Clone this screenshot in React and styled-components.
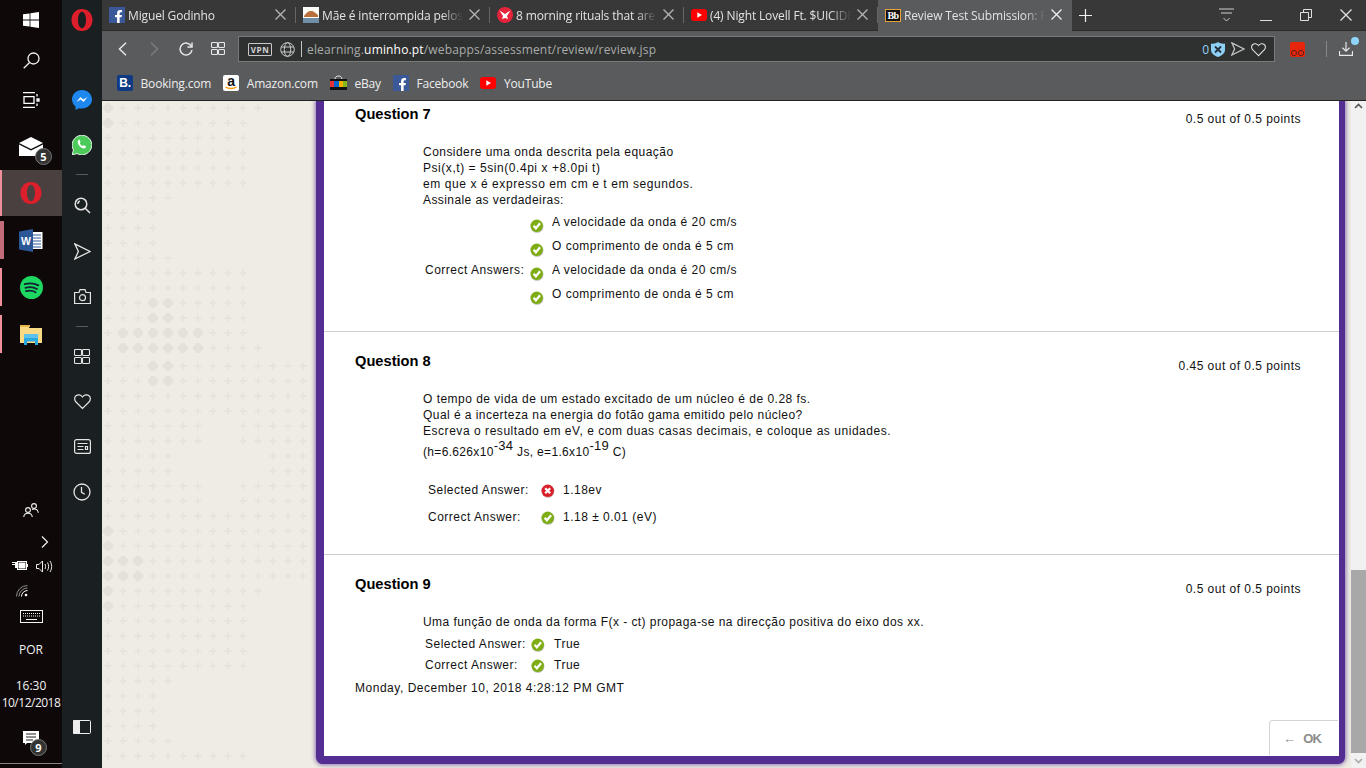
import React from "react";
import styled, { createGlobalStyle } from "styled-components";
import { FaFacebookF } from "react-icons/fa";

const GlobalStyle = createGlobalStyle`
  html, body {
    margin: 0;
    width: 1366px;
    height: 768px;
    overflow: hidden;
    background: #0f0809;
  }
  * { box-sizing: border-box; }
`;

// Shell =========================

const Screen = styled.div`
  display: flex;
  width: 1366px;
  height: 768px;
  overflow: hidden;
  font-family: "Liberation Sans", Arial, sans-serif;
`;

const Taskbar = styled.aside`
  display: flex;
  flex-direction: column;
  width: 62px;
  flex: none;
  background: #0f0809;
  color: #f2f2f2;
  font-family: "Open Sans", sans-serif;
`;

const TaskSlot = styled.div`
  position: relative;
  display: flex;
  align-items: center;
  justify-content: center;
  height: ${({ $h }) => $h || 40}px;
  margin-top: ${({ $mt }) => $mt || 0}px;
  padding-top: ${({ $pt }) => $pt || 0}px;
  background: ${({ $active }) => ($active ? "#4a4040" : "transparent")};
  ${({ $bar }) =>
    $bar &&
    `
    &::before {
      content: "";
      position: absolute;
      left: 0;
      top: ${$bar.top}px;
      bottom: ${$bar.bottom}px;
      width: ${$bar.w}px;
      background: ${$bar.c};
    }
  `}
`;

const CountBadge = styled.span`
  position: absolute;
  left: ${({ $x }) => $x}px;
  top: ${({ $y }) => $y}px;
  display: flex;
  align-items: center;
  justify-content: center;
  width: 17px;
  height: 17px;
  border-radius: 50%;
  background: #333;
  border: 1px solid #777;
  color: #fff;
  font-size: 11px;
  font-weight: 700;
`;

const TaskSpacer = styled.div`
  flex: 1;
`;

const TrayRow = styled.div`
  display: flex;
  align-items: center;
  justify-content: ${({ $justify }) => $justify || "center"};
  gap: ${({ $gap }) => $gap || 0}px;
  height: ${({ $h }) => $h}px;
  padding: ${({ $pad }) => $pad || "0"};
  margin-bottom: ${({ $mb }) => $mb || 0}px;
`;

const TrayText = styled.div`
  font-size: ${({ $size }) => $size || 12}px;
  line-height: ${({ $lh }) => $lh || 17}px;
  text-align: center;
  letter-spacing: ${({ $ls }) => $ls || 0}px;
  white-space: nowrap;
`;

const TaskFoot = styled.div`
  height: 1px;
  margin: 3px 0 4px;
  background: #8a8080;
`;

const OperaRail = styled.nav`
  display: flex;
  flex-direction: column;
  align-items: center;
  width: 40px;
  flex: none;
  background: #1a1f21;
`;

const RailSlot = styled.div`
  display: flex;
  align-items: center;
  justify-content: center;
  width: 100%;
  height: ${({ $h }) => $h || 45}px;
  margin-top: ${({ $mt }) => $mt || 0}px;
  margin-bottom: ${({ $mb }) => $mb || 0}px;
`;

const RailRule = styled.div`
  width: 12px;
  height: 1px;
  margin: ${({ $m }) => $m};
  background: #555a5c;
`;

const RailSpacer = styled.div`
  flex: 1;
`;

const BrowserPane = styled.main`
  display: flex;
  flex-direction: column;
  flex: 1;
  min-width: 0;
`;

// Browser chrome =========================

const TabStrip = styled.div`
  display: flex;
  align-items: stretch;
  height: 31px;
  flex: none;
  background: #383838;
  border-bottom: 1px solid #2a2a2a;
  font-family: "Open Sans", sans-serif;
`;

const Tab = styled.div`
  position: relative;
  display: flex;
  align-items: center;
  width: 194px;
  flex: none;
  padding-left: 7px;
  height: ${({ $active }) => ($active ? 31 : 30)}px;
  background: ${({ $active }) => ($active ? "#5a5b5d" : "transparent")};
  ${({ $active }) =>
    !$active &&
    `
    &::after {
      content: "";
      position: absolute;
      right: 0;
      top: 7px;
      height: 16px;
      width: 1px;
      background: #666;
    }
  `}
`;

const Favicon = styled.span`
  display: flex;
  align-items: center;
  justify-content: center;
  width: 16px;
  height: 16px;
  flex: none;
  overflow: hidden;
  background: ${({ $bg }) => $bg || "transparent"};
  color: ${({ $color }) => $color || "#fff"};
  border-radius: ${({ $r }) => $r || 0}px;
  font-family: "Liberation Sans", sans-serif;
  font-size: 12px;
  font-weight: 700;
`;

const BbMark = styled(Favicon)`
  background: #111;
  border: 1px solid #e6a23c;
  height: 13px;
  font-family: "Liberation Serif", serif;
  font-size: 10px;
  letter-spacing: -0.5px;
`;

const TabTitle = styled.span`
  width: 141px;
  margin-left: 3px;
  flex: none;
  overflow: hidden;
  white-space: nowrap;
  font-size: 12px;
  letter-spacing: -0.14px;
  color: #e2e2e2;
  -webkit-mask-image: linear-gradient(to right, #000 85%, transparent 100%);
  mask-image: linear-gradient(to right, #000 85%, transparent 100%);
`;

const TabClose = styled.span`
  position: absolute;
  right: 10px;
  top: 9px;
  display: flex;
`;

const StripEnd = styled.div`
  display: flex;
  align-items: center;
  flex: 1;
  padding-left: 7px;
`;

const WindowButtons = styled.div`
  display: flex;
  align-items: center;
  margin-left: auto;
`;

const WindowButton = styled.span`
  display: flex;
  align-items: center;
  justify-content: center;
  width: 40px;
`;

const Toolbar = styled.div`
  display: flex;
  align-items: center;
  height: 36px;
  flex: none;
  background: #5a5b5d;
  padding-left: 4px;
`;

const NavButton = styled.span`
  display: flex;
  align-items: center;
  justify-content: center;
  width: 32px;
`;

const AddressBar = styled.div`
  display: flex;
  align-items: center;
  width: 1037px;
  height: 26px;
  margin-left: 4px;
  padding: 0 9px;
  background: #2f3130;
  border: 1px solid #77797a;
  font-family: "Open Sans", sans-serif;
`;

const VpnBadge = styled.span`
  display: flex;
  align-items: center;
  justify-content: center;
  width: 24px;
  height: 13px;
  margin-right: 8px;
  border: 1px solid #c8c8c8;
  border-radius: 1px;
  color: #d4d4d4;
  font-size: 8px;
  font-weight: 700;
  letter-spacing: 0.6px;
`;

const AddressDivider = styled.span`
  width: 1px;
  height: 16px;
  margin: 0 5px 0 6px;
  background: #c4c4c4;
`;

const UrlText = styled.span`
  margin-top: 1px;
  font-size: 12px;
  letter-spacing: 0.16px;
  color: #a9abaa;
  white-space: nowrap;
  b {
    font-weight: 400;
    color: #fff;
  }
`;

const AddressEnd = styled.div`
  display: flex;
  align-items: center;
  gap: 6px;
  margin-left: auto;
  margin-right: -1px;
  color: #8fd0f7;
  font-size: 12px;
`;

const ShieldCount = styled.span`
  margin-right: -4px;
`;

const ToolbarEnd = styled.div`
  display: flex;
  align-items: center;
  flex: 1;
  padding-left: 15px;
`;

const ToolDivider = styled.span`
  width: 1px;
  height: 16px;
  margin: 0 12px 0 21px;
  background: #85878a;
`;

const DownloadWrap = styled.span`
  position: relative;
  display: flex;
  &::after {
    content: "";
    position: absolute;
    right: -6px;
    top: -5px;
    width: 8px;
    height: 8px;
    border-radius: 50%;
    background: #8fd4fb;
  }
`;

const Bookmarks = styled.div`
  display: flex;
  align-items: center;
  height: 34px;
  flex: none;
  padding: 0 0 1px 15px;
  background: #5a5b5d;
  border-bottom: 1px solid #222;
  font-family: "Open Sans", sans-serif;
`;

const Bookmark = styled.div`
  display: flex;
  align-items: center;
  gap: 7.5px;
  margin-right: 12px;
  color: #ededed;
  font-size: 12px;
  letter-spacing: -0.17px;
  white-space: nowrap;
`;

// Page =========================

const PageArea = styled.div`
  position: relative;
  display: flex;
  flex: 1;
  min-height: 0;
  overflow: hidden;
  background: #efece4;
`;

const Texture = styled.svg`
  position: absolute;
  left: 0;
  top: 0;
`;

const Panel = styled.section`
  position: relative;
  display: flex;
  flex-direction: column;
  width: 1029px;
  margin: 0 0 4px 214px;
  background: #fff;
  border: solid #532d91;
  border-width: 0 6px 8px 8px;
  border-radius: 0 0 7px 7px;
  box-shadow: 0 0 4px 1px rgba(83, 45, 145, 0.65);
  color: #111;
  font-size: 12px;
  line-height: 16px;
`;

const Question = styled.article`
  padding: ${({ $top }) => $top}px 38px ${({ $bottom }) => $bottom}px 31px;
  border-bottom: ${({ $ruled }) => ($ruled ? "1px solid #cfcfcf" : "none")};
`;

const QuestionHead = styled.header`
  display: flex;
  justify-content: space-between;
  height: 21px;
`;

const QuestionTitle = styled.h3`
  margin: 0;
  font-size: 14.67px;
  line-height: 16px;
  font-weight: 700;
  color: #000;
`;

const Points = styled.span`
  margin-top: 5px;
  font-size: 12px;
  letter-spacing: 0.47px;
`;

const Prompt = styled.div`
  margin: 17px 0 0 68px;
  letter-spacing: ${({ $ls }) => $ls || 0.46}px;
  white-space: nowrap;
`;

const PromptLine = styled.div`
  margin-top: ${({ $mt }) => $mt || 0}px;
  letter-spacing: ${({ $ls }) => ($ls === undefined ? "inherit" : `${$ls}px`)};
`;

const Sup = styled.sup`
  font-size: 13px;
  line-height: 0;
  vertical-align: 6px;
  letter-spacing: 0.3px;
`;

const Answers = styled.div`
  display: grid;
  grid-template-columns: ${({ $label }) => $label}px ${({ $mark }) => $mark || 23}px 1fr;
  grid-auto-rows: ${({ $row }) => $row}px;
  margin: ${({ $top }) => $top}px 0 0 ${({ $left }) => $left}px;
  letter-spacing: 0.5px;
`;

const AnswerCell = styled.div`
  padding-top: ${({ $pad }) => $pad}px;
  white-space: nowrap;
`;

const AnswerMark = styled.div`
  padding-top: ${({ $pad }) => $pad}px;
`;

const Timestamp = styled.div`
  margin-top: 4px;
  letter-spacing: 0.52px;
`;

const OkButton = styled.button`
  position: absolute;
  right: 1px;
  bottom: 1px;
  display: flex;
  align-items: center;
  justify-content: flex-start;
  gap: 8px;
  width: 69px;
  height: 35px;
  padding: 0 0 0 13px;
  background: #fff;
  border: 1px solid #d4d4d4;
  border-width: 1px 0 0 1px;
  border-radius: 4px 0 0 0;
  color: #8c8c8c;
  font-family: "Liberation Sans", sans-serif;
  font-size: 13px;
  font-weight: 700;
  letter-spacing: -0.8px;
`;

const Scrollbar = styled.div`
  position: relative;
  display: flex;
  flex-direction: column;
  align-items: center;
  justify-content: space-between;
  width: 15px;
  margin-left: auto;
  background: #f1f1f1;
  padding: 2px 0 4px;
`;

const ScrollThumb = styled.div`
  position: absolute;
  left: 0;
  right: 0;
  top: 469px;
  height: 183px;
  background: #a8a8a8;
`;

// Icons =========================

const Line = ({ w = 16, h = 16, sw = 1.4, color = "#dcdcdc", children }) => (
  <svg width={w} height={h} viewBox={`0 0 ${w} ${h}`} fill="none" stroke={color} strokeWidth={sw}>
    {children}
  </svg>
);

const CheckIcon = () => (
  <svg width="14" height="14" viewBox="0 0 14 14">
    <circle cx="7" cy="7.4" r="6.4" fill="#b9bdb0" />
    <circle cx="6.7" cy="6.8" r="6.2" fill="#7fae14" />
    <path d="M3.6 6.8l2.3 2.5 4.2-5" fill="none" stroke="#fff" strokeWidth="2.2" />
  </svg>
);

const CrossIcon = () => (
  <svg width="14" height="14" viewBox="0 0 14 14">
    <circle cx="7" cy="7.4" r="6.4" fill="#c9b5b5" />
    <circle cx="6.7" cy="6.8" r="6.2" fill="#d9202a" />
    <path d="M4.2 4.3l5 5M9.2 4.3l-5 5" fill="none" stroke="#fff" strokeWidth="2.2" />
  </svg>
);

const CloseX = ({ size = 11, color = "#bdbdbd" }) => (
  <Line w={size} h={size} sw={1.3} color={color}>
    <path d={`M0.5 0.5L${size - 0.5} ${size - 0.5}M${size - 0.5} 0.5L0.5 ${size - 0.5}`} />
  </Line>
);

const OperaLogo = ({ size = 24 }) => (
  <svg width={size} height={size} viewBox="0 0 24 24">
    <path
      fillRule="evenodd"
      d="M12 1C5.700 1 1.500 5.900 1.500 12S5.700 23 12 23s10.500-4.900 10.500-11S18.300 1 12 1zm0 2.800c2.400 0 4 3.700 4 8.200s-1.600 8.200-4 8.200-4-3.700-4-8.200 1.600-8.200 4-8.200z"
      fill="#dd1f2c"
    />
  </svg>
);

const WindowsLogo = () => (
  <svg width="16" height="16" viewBox="0 0 16 16" fill="#fff">
    <path d="M0 2.3l6.6-.9v6.2H0zM7.4 1.3L16 0v7.6H7.4zM0 8.4h6.6v6.2L0 13.7zM7.4 8.4H16V16l-8.6-1.3z" />
  </svg>
);

const TaskViewIcon = () => (
  <Line w={17} h={16} color="#fff" sw={1.3}>
    <path d="M0 .7h12M0 15.3h12M1 4.7h10v6.6H1zM14 2v2.4M14 7h2v2h-2zM14 11.6V14" />
  </Line>
);

const SearchIcon = () => (
  <Line w={17} h={17} color="#f2f2f2" sw={1.3}>
    <circle cx="10.5" cy="6.5" r="5.5" />
    <path d="M6.6 10.5L.7 16.3" />
  </Line>
);

const MailIcon = () => (
  <svg width="24" height="19" viewBox="0 0 24 19">
    <path d="M0 6L12 0l12 6-12 6z" fill="#fff" />
    <path d="M0 7.5l12 6 12-6V19H0z" fill="#fff" />
  </svg>
);

const WordIcon = () => (
  <svg width="24" height="23" viewBox="0 0 24 23">
    <rect x="10" y="3" width="13.5" height="17" fill="#fff" />
    <path d="M14 6h8M14 9h8M14 12h8M14 15h8M14 18h8" stroke="#2b5797" strokeWidth="1" />
    <path d="M0 2.5L14 0v23L0 20.5z" fill="#2b5797" />
    <text x="2" y="15.5" fontFamily="Liberation Sans" fontSize="10.5" fontWeight="700" fill="#fff">W</text>
  </svg>
);

const SpotifyIcon = () => (
  <svg width="23" height="23" viewBox="0 0 23 23">
    <circle cx="11.5" cy="11.5" r="11.5" fill="#1ed760" />
    <path d="M4.7 8.2c4.6-1.3 9.8-1 13.6 1.2M5.4 11.8c3.9-1.1 8.3-.7 11.6 1.2M6 15.2c3.2-.8 6.9-.5 9.6 1" fill="none" stroke="#123" strokeWidth="1.8" strokeLinecap="round" />
  </svg>
);

const FolderIcon = () => (
  <svg width="22" height="20" viewBox="0 0 22 20">
    <path d="M0 1h8l1.5 2H22v15H0z" fill="#f8da84" />
    <path d="M0 0h10v2H0z" fill="#eab54a" />
    <path d="M4 13h14v7h-3v-3.500H7V20H4z" fill="#2aa6e0" />
    <path d="M4 9h14v4H4z" fill="#5cc1ec" />
  </svg>
);

const PeopleIcon = () => (
  <Line w={16} h={15} color="#f0f0f0" sw={1.1}>
    <circle cx="5" cy="7" r="2.4" />
    <circle cx="11" cy="3" r="2.4" />
    <path d="M.7 14c.3-2.500 2-3.800 4.300-3.800S9 11.500 9.300 14M9 6.500c.6-.3 1.300-.5 2-.5 2.300 0 4 1.300 4.300 3.800" />
  </Line>
);

const BatteryIcon = () => (
  <svg width="16" height="10" viewBox="0 0 16 10">
    <path d="M0 1.500h3M0 3.500h3" stroke="#fff" strokeWidth="1" />
    <rect x="3" y="1" width="2" height="6" fill="#fff" />
    <rect x="5.500" y=".5" width="9" height="8" fill="none" stroke="#fff" />
    <rect x="6.500" y="1.500" width="7" height="6" fill="#fff" />
    <rect x="14.500" y="3" width="1.500" height="3" fill="#fff" />
  </svg>
);

const VolumeIcon = () => (
  <Line w={17} h={13} color="#f0f0f0" sw={1}>
    <path d="M.5 4.500h2.500L6.500 1v11L3 8.500H.5zM9 4c.8 1.500.8 3.500 0 5M11.500 2.500c1.500 2.500 1.500 5.500 0 8M14 1c2.200 3.500 2.200 7.500 0 11" />
  </Line>
);

const WifiIcon = () => (
  <svg width="12" height="12" viewBox="0 0 12 12" fill="none" stroke="#8f8f8f" strokeWidth="1">
    <path d="M.5 11.500a11 11 0 0 1 11-11" />
    <path d="M3 11.500a8.500 8.500 0 0 1 8.500-8.500" />
    <path d="M5.500 11.500a6 6 0 0 1 6-6" stroke="#fff" />
    <circle cx="10" cy="10" r="1.300" fill="#fff" stroke="none" />
  </svg>
);

const KeyboardIcon = () => (
  <Line w={23} h={13} color="#f4f4f4" sw={1}>
    <rect x=".5" y=".5" width="22" height="12" />
    <path d="M3 3.500h17M3 6h17" strokeDasharray="1 1" />
    <path d="M6 9.500h11" />
  </Line>
);

const NotesIcon = () => (
  <svg width="16" height="14" viewBox="0 0 16 14">
    <path d="M0 0h16v12H4l-2 2v-2H0z" fill="#fff" />
    <path d="M3 3h10M3 6h10M3 9h7" stroke="#222" strokeWidth="1" />
  </svg>
);

const MessengerIcon = () => (
  <svg width="20" height="20" viewBox="0 0 20 20">
    <path d="M10 0C4.500 0 0 4.100 0 9.300c0 2.900 1.300 5.400 3.500 7.100V20l3.300-1.800c1 .3 2 .4 3.200.4 5.500 0 10-4.100 10-9.300S15.500 0 10 0z" fill="#1e88f0" />
    <path d="M4.500 12l4-5 2.700 2.500L15.500 7l-4 5-2.700-2.500z" fill="#fff" />
  </svg>
);

const WhatsappIcon = () => (
  <svg width="20" height="20" viewBox="0 0 20 20">
    <path d="M0 20l1.500-5A9.800 9.800 0 1 1 5 18.500z" fill="#4ccb5b" stroke="#e9f5e9" strokeWidth="1" />
    <path d="M6.500 5c-1.500 1.300-1 3.500.8 5.700 2 2.300 4.500 3.400 6 2.300.8-.6.900-1.400.5-1.700l-1.800-1c-.4-.2-.7 0-1 .5-.3.400-.6.400-1.300-.2-.9-.7-1.500-1.400-1.800-2-.2-.4 0-.7.300-1 .3-.3.300-.6.200-.9l-.8-1.800c-.2-.4-.6-.4-1.100.1z" fill="#fff" />
  </svg>
);

const RailSearch = () => (
  <Line w={17} h={17} color="#e4e4e4" sw={1.5}>
    <circle cx="7" cy="7" r="5.800" />
    <path d="M3.800 7a3.200 3.200 0 0 1 2-3M11 11l5 5" />
  </Line>
);

const SendIcon = ({ size = 17, color = "#e4e4e4" }) => (
  <Line w={size} h={size} color={color} sw={1.3}>
    <path d={`M.8 .8L${size - 1} ${size / 2}L.8 ${size - 1}L${size * 0.26} ${size / 2}z`} />
  </Line>
);

const CameraIcon = () => (
  <Line w={17} h={15} color="#e4e4e4" sw={1.2}>
    <path d="M.6 3.500h4.400L6 .6h5l1 2.900h4.400v11H.6z" />
    <circle cx="8.500" cy="8.700" r="3" />
  </Line>
);

const GridIcon = ({ size = 15, color = "#e4e4e4" }) => {
  const cell = (size - 2) / 2;
  return (
    <Line w={size} h={size} color={color} sw={1.1}>
      <rect x=".5" y=".5" width={cell} height={cell - 1} rx="1" />
      <rect x={cell + 1.5} y=".5" width={cell} height={cell - 1} rx="1" />
      <rect x=".5" y={cell + 1.5} width={cell} height={cell - 1} rx="1" />
      <rect x={cell + 1.5} y={cell + 1.5} width={cell} height={cell - 1} rx="1" />
    </Line>
  );
};

const HeartIcon = ({ size = 17, color = "#e4e4e4" }) => (
  <svg width={size} height={size} viewBox="0 0 17 17" fill="none" stroke={color} strokeWidth="1.200">
    <path d="M8.500 15.500L2 9C.200 7.200.200 4.300 2 2.800c1.800-1.500 4.700-1.200 6.500 1.200 1.800-2.400 4.700-2.700 6.500-1.200 1.800 1.500 1.800 4.400 0 6.200z" />
  </svg>
);

const NewsIcon = () => (
  <Line w={17} h={15} color="#e4e4e4" sw={1.2}>
    <rect x=".6" y=".6" width="15.800" height="13.800" rx="2" />
    <path d="M3.500 4.500h10M3.500 7.500h6M3.500 10.500h6M11.500 7.500h2v3h-2z" />
  </Line>
);

const ClockIcon = () => (
  <Line w={18} h={18} color="#e4e4e4" sw={1.3}>
    <circle cx="9" cy="9" r="8" />
    <path d="M8.500 4v5.300l3.300 2" />
  </Line>
);

const PanelToggle = () => (
  <svg width="18" height="14" viewBox="0 0 18 14">
    <rect x=".5" y=".5" width="17" height="13" rx="1" fill="#1a1f21" stroke="#eee" />
    <rect x="0" y="0" width="7" height="14" rx="1" fill="#eee" />
  </svg>
);

const YoutubeMark = () => (
  <svg width="16" height="12" viewBox="0 0 16 12">
    <rect width="16" height="12" rx="3" fill="#f00" />
    <path d="M6.300 3.300L11 6l-4.700 2.700z" fill="#fff" />
  </svg>
);

const ThumbFavicon = () => (
  <svg width="16" height="16" viewBox="0 0 16 16">
    <rect width="16" height="16" fill="#fbfbf8" />
    <path d="M1 9c2-3 4-5 7-5s4 2 7 4v2H1z" fill="#b9703a" />
    <rect y="11" width="16" height="5" fill="#6f8ea8" />
  </svg>
);

const BirdFavicon = () => (
  <svg width="16" height="16" viewBox="0 0 16 16">
    <circle cx="8" cy="8" r="8" fill="#e5243b" />
    <path d="M2.500 3.500L8 7l5.500-3.500L10 9l1 3-3-1-3 1 1-3z" fill="#fff" />
  </svg>
);

const AmazonMark = () => (
  <Favicon $bg="#fff" $color="#111" $r={2}>
    <svg width="16" height="16" viewBox="0 0 16 16">
      <text x="8" y="10.500" textAnchor="middle" fontFamily="Liberation Sans" fontSize="14" fontWeight="700" fill="#111">a</text>
      <path d="M2.500 12c3 2 8 2 11 0" fill="none" stroke="#f90" strokeWidth="1.500" />
    </svg>
  </Favicon>
);

const EbayBag = () => (
  <svg width="17" height="16" viewBox="0 0 17 16">
    <path d="M5 4c0-4 7-4 7 0" fill="none" stroke="#eee" strokeWidth="1" />
    <rect y="4" width="17" height="2" fill="#111" />
    <rect y="6" width="4" height="6" fill="#e53238" />
    <rect x="4" y="6" width="5" height="6" fill="#0064d2" />
    <rect x="9" y="6" width="4" height="6" fill="#f5af02" />
    <rect x="13" y="6" width="4" height="6" fill="#86b817" />
    <rect y="12" width="17" height="3" fill="#111" />
  </svg>
);

const GlobeIcon = () => (
  <Line w={15} h={15} color="#c9c9c9" sw={1}>
    <circle cx="7.500" cy="7.500" r="6.800" />
    <ellipse cx="7.500" cy="7.500" rx="3.200" ry="6.800" />
    <path d="M1.200 5h12.600M1.200 10h12.600" />
  </Line>
);

const ShieldBadge = () => (
  <svg width="14" height="15" viewBox="0 0 14 15">
    <path d="M0 1.500C2 2 5 1.500 7 0c2 1.500 5 2 7 1.500V8c0 3-3 5.500-7 7-4-1.500-7-4-7-7z" fill="#8fd0f7" />
    <path d="M4 4.500l6 6M10 4.500l-6 6" stroke="#24303a" strokeWidth="1.800" />
  </svg>
);

const SnapIcon = () => (
  <svg width="15" height="15" viewBox="0 0 15 15">
    <rect width="15" height="15" rx="2" fill="#e8260c" />
    <circle cx="4" cy="11" r="2.600" fill="#e8260c" stroke="#5b2018" />
    <circle cx="11" cy="11" r="2.600" fill="#e8260c" stroke="#5b2018" />
  </svg>
);

const DownloadIcon = () => (
  <Line w={14} h={14} color="#e8e8e8" sw={1.200}>
    <path d="M7 0v9M3.500 5.800L7 9.200l3.500-3.400M.5 9v4.300h13V9" />
  </Line>
);

const StackMenu = () => (
  <Line w={15} h={14} color="#cfcfcf" sw={1}>
    <path d="M0 1h15M2 5h11M4.500 10l3 3 3-3" />
  </Line>
);

const Restore = () => (
  <Line w={12} h={12} color="#e0e0e0" sw={1}>
    <path d="M.5 3.500h8v8h-8zM3.500 3.500v-3h8v8h-3" />
  </Line>
);

const FacebookMark = () => (
  <Favicon $bg="#3b5998">
    <FaFacebookF size={13} style={{ marginTop: 3, marginLeft: 3 }} />
  </Favicon>
);

// Background =========================

const fullRow = (count, blobs = []) => ({ ranges: [[0, count - 1]], blobs });
const gapRow = (a, b) => ({ ranges: [[0, a], [b, 13]], blobs: [] });

const textureRows = [
  [108, fullRow(11, [0])], [123, fullRow(10, [0])], [138, fullRow(10)], [153, fullRow(10)],
  [168, fullRow(10)], [183, fullRow(10)], [198, fullRow(5)], [213, fullRow(4)],
  [228, fullRow(4)], [243, fullRow(4)], [258, fullRow(5)], [273, fullRow(10)],
  [288, fullRow(10)], [303, fullRow(10, [3, 4])], [318, fullRow(10, [3, 4])],
  [333, fullRow(10, [1, 2, 3, 4, 5, 6])], [348, fullRow(11, [1, 2, 3, 4, 5, 6])],
  [366, fullRow(14, [3, 4])], [381, fullRow(14, [3, 4])], [396, fullRow(14)], [411, fullRow(14)],
  [426, gapRow(6, 9)], [441, gapRow(6, 9)], [456, gapRow(4, 11)], [471, gapRow(4, 11)],
  [486, gapRow(6, 9)], [501, gapRow(6, 9)], [516, fullRow(14)], [531, fullRow(14, [0])],
  [546, fullRow(14, [0])], [561, fullRow(14, [0, 1, 2])], [576, fullRow(14, [0, 1, 2])],
  [591, fullRow(11, [0])], [606, fullRow(10, [0])], [621, fullRow(10)], [636, fullRow(10)],
  [651, fullRow(10)], [666, fullRow(10)], [681, fullRow(5)], [696, fullRow(4)],
  [711, fullRow(4)], [726, fullRow(4)], [741, fullRow(5)], [756, fullRow(10)],
];

const PageTexture = () => (
  <Texture width="214" height="667" viewBox="0 0 214 667">
    {textureRows.map(([rowY, row]) => {
      const y = rowY - 101;
      const marks = [];
      row.ranges.forEach(([from, to]) => {
        for (let i = from; i <= to; i++) {
          const x = 6 + 15 * i;
          if (x > 206) continue;
          marks.push(
            row.blobs.includes(i) ? (
              <g key={i} fill="#e3e1d8">
                <circle cx={x - 2.500} cy={y} r="2.800" />
                <circle cx={x + 2.500} cy={y} r="2.800" />
                <circle cx={x} cy={y - 2.500} r="2.800" />
                <circle cx={x} cy={y + 2.500} r="2.800" />
              </g>
            ) : (
              <path key={i} d={`M${x - 3.500} ${y}h7M${x} ${y - 3.500}v7`} stroke="#e6e4db" strokeWidth="2" />
            )
          );
        }
      });
      return <g key={rowY}>{marks}</g>;
    })}
  </Texture>
);

const tabs = [
  { title: "Miguel Godinho", icon: <FacebookMark /> },
  { title: "Mãe é interrompida pelos filhos", icon: <Favicon><ThumbFavicon /></Favicon> },
  { title: "8 morning rituals that are ha", icon: <Favicon><BirdFavicon /></Favicon> },
  { title: "(4) Night Lovell Ft. $UICIDEBOY$", icon: <Favicon><YoutubeMark /></Favicon> },
  { title: "Review Test Submission: FOE", icon: <BbMark>Bb</BbMark>, active: true },
];

const bookmarks = [
  { label: "Booking.com", icon: <Favicon $bg="#0f3a84" $r={2}>B.</Favicon> },
  { label: "Amazon.com", icon: <AmazonMark /> },
  { label: "eBay", icon: <EbayBag /> },
  { label: "Facebook", icon: <FacebookMark /> },
  { label: "YouTube", icon: <YoutubeMark /> },
];

const AnswerRow = ({ label, mark, text, pad }) => (
  <>
    <AnswerCell $pad={pad}>{label}</AnswerCell>
    <AnswerMark $pad={pad + (mark === "q7" ? 5 : 2)}>
      {mark === "wrong" ? <CrossIcon /> : <CheckIcon />}
    </AnswerMark>
    <AnswerCell $pad={pad}>{text}</AnswerCell>
  </>
);

export default function App() {
  return (
    <Screen>
      <GlobalStyle />
      <Taskbar>
        <TaskSlot><WindowsLogo /></TaskSlot>
        <TaskSlot><SearchIcon /></TaskSlot>
        <TaskSlot><TaskViewIcon /></TaskSlot>
        <TaskSlot $h={47} $mt={3}>
          <MailIcon />
          <CountBadge $x={35} $y={25}>5</CountBadge>
        </TaskSlot>
        <TaskSlot $h={46} $active $bar={{ top: 0, bottom: 0, w: 2, c: "#ef8f9c" }}><OperaLogo /></TaskSlot>
        <TaskSlot $h={47} $mt={1} $bar={{ top: 4, bottom: 5, w: 4, c: "#c26c7a" }}><WordIcon /></TaskSlot>
        <TaskSlot $h={47} $bar={{ top: 4, bottom: 5, w: 2, c: "#ef8f9c" }}><SpotifyIcon /></TaskSlot>
        <TaskSlot $h={47} $bar={{ top: 4, bottom: 5, w: 2, c: "#ef8f9c" }}><FolderIcon /></TaskSlot>
        <TaskSpacer />
        <TrayRow $h={40}><PeopleIcon /></TrayRow>
        <TrayRow $h={24} $justify="flex-end" $pad="0 13px 0 0">
          <Line w={8} h={12} color="#f0f0f0" sw={1.2}><path d="M1 .5L6.500 6 1 11.500" /></Line>
        </TrayRow>
        <TrayRow $h={24} $gap={8} $pad="0 0 0 3px"><BatteryIcon /><VolumeIcon /></TrayRow>
        <TrayRow $h={26} $justify="flex-start" $pad="0 0 0 16px"><WifiIcon /></TrayRow>
        <TrayRow $h={24}><KeyboardIcon /></TrayRow>
        <TrayRow $h={42} $mb={7}><TrayText>POR</TrayText></TrayRow>
        <TrayText $lh={17}>16:30</TrayText>
        <TrayText $lh={17} $ls={-0.5}>10/12/2018</TrayText>
        <TaskSlot $h={49} $pt={5}>
          <NotesIcon />
          <CountBadge $x={30} $y={28}>9</CountBadge>
        </TaskSlot>
        <TaskFoot />
      </Taskbar>

      <OperaRail>
        <RailSlot $h={40}><OperaLogo /></RailSlot>
        <RailSlot $mt={37}><MessengerIcon /></RailSlot>
        <RailSlot><WhatsappIcon /></RailSlot>
        <RailRule $m="7px 0 0" />
        <RailSlot $mt={8}><RailSearch /></RailSlot>
        <RailSlot $mt={1}><SendIcon /></RailSlot>
        <RailSlot $h={44}><CameraIcon /></RailSlot>
        <RailRule $m="8px 0 0" />
        <RailSlot $mt={7}><GridIcon size={16} /></RailSlot>
        <RailSlot><HeartIcon /></RailSlot>
        <RailSlot><NewsIcon /></RailSlot>
        <RailSlot><ClockIcon /></RailSlot>
        <RailSpacer />
        <RailSlot $h={40} $mb={21}><PanelToggle /></RailSlot>
      </OperaRail>

      <BrowserPane>
        <TabStrip>
          {tabs.map((tab) => (
            <Tab key={tab.title} $active={tab.active}>
              {tab.icon}
              <TabTitle>{tab.title}</TabTitle>
              <TabClose><CloseX color={tab.active ? "#f0f0f0" : "#b5b5b5"} /></TabClose>
            </Tab>
          ))}
          <StripEnd>
            <Line w={13} h={13} color="#f0f0f0" sw={1.2}><path d="M6.500 0v13M0 6.500h13" /></Line>
            <WindowButtons>
              <WindowButton><StackMenu /></WindowButton>
              <WindowButton><Line w={12} h={12} color="#e0e0e0" sw={1}><path d="M0 11.500h12" /></Line></WindowButton>
              <WindowButton><Restore /></WindowButton>
              <WindowButton><CloseX size={12} color="#e0e0e0" /></WindowButton>
            </WindowButtons>
          </StripEnd>
        </TabStrip>

        <Toolbar>
          <NavButton><Line w={9} h={14} color="#e8e8e8" sw={1.5}><path d="M8 .7L1.500 7 8 13.300" /></Line></NavButton>
          <NavButton><Line w={9} h={14} color="#7b7d7f" sw={1.5}><path d="M1 .7L7.500 7 1 13.300" /></Line></NavButton>
          <NavButton>
            <Line w={14} h={14} color="#e8e8e8" sw={1.5}>
              <path d="M12.500 4.500A6 6 0 1 0 13 8" />
              <path d="M13 .5v4.500H8.500" />
            </Line>
          </NavButton>
          <NavButton><GridIcon size={14} color="#e8e8e8" /></NavButton>
          <AddressBar>
            <VpnBadge>VPN</VpnBadge>
            <GlobeIcon />
            <AddressDivider />
            <UrlText>elearning.<b>uminho.pt</b>/webapps/assessment/review/review.jsp</UrlText>
            <AddressEnd>
              <ShieldCount>0</ShieldCount>
              <ShieldBadge />
              <SendIcon size={14} color="#c2c2c2" />
              <HeartIcon size={15} color="#e0e0e0" />
            </AddressEnd>
          </AddressBar>
          <ToolbarEnd>
            <SnapIcon />
            <ToolDivider />
            <DownloadWrap><DownloadIcon /></DownloadWrap>
          </ToolbarEnd>
        </Toolbar>

        <Bookmarks>
          {bookmarks.map((item) => (
            <Bookmark key={item.label}>{item.icon}{item.label}</Bookmark>
          ))}
        </Bookmarks>

        <PageArea>
          <PageTexture />
          <Panel>
            <Question $top={5} $bottom={25} $ruled>
              <QuestionHead>
                <QuestionTitle>Question 7</QuestionTitle>
                <Points>0.5 out of 0.5 points</Points>
              </QuestionHead>
              <Prompt>
                <PromptLine>Considere uma onda descrita pela equação</PromptLine>
                <PromptLine $ls={0.55}>Psi(x,t) = 5sin(0.4pi x +8.0pi t)</PromptLine>
                <PromptLine $ls={0.58}>em que x é expresso em cm e t em segundos.</PromptLine>
                <PromptLine $ls={0.42}>Assinale as verdadeiras:</PromptLine>
              </Prompt>
              <Answers $label={105} $mark={22} $row={24} $top={2} $left={70}>
                <AnswerRow label="" mark="q7" text="A velocidade da onda é 20 cm/s" pad={4} />
                <AnswerRow label="" mark="q7" text="O comprimento de onda é 5 cm" pad={4} />
                <AnswerRow label="Correct Answers:" mark="q7" text="A velocidade da onda é 20 cm/s" pad={4} />
                <AnswerRow label="" mark="q7" text="O comprimento de onda é 5 cm" pad={4} />
              </Answers>
            </Question>

            <Question $top={21} $bottom={23} $ruled>
              <QuestionHead>
                <QuestionTitle>Question 8</QuestionTitle>
                <Points>0.45 out of 0.5 points</Points>
              </QuestionHead>
              <Prompt $ls={0.54}>
                <PromptLine $ls={0.48}>O tempo de vida de um estado excitado de um núcleo é de 0.28 fs.</PromptLine>
                <PromptLine $ls={0.45}>Qual é a incerteza na energia do fotão gama emitido pelo núcleo?</PromptLine>
                <PromptLine>Escreva o resultado em eV, e com duas casas decimais, e coloque as unidades.</PromptLine>
                <PromptLine $mt={5} $ls={0.33}>(h=6.626x10<Sup>-34</Sup> Js, e=1.6x10<Sup>-19</Sup> C)</PromptLine>
              </Prompt>
              <Answers $label={113} $mark={22} $row={27} $top={17} $left={73}>
                <AnswerRow label="Selected Answer:" mark="wrong" text="1.18ev" pad={5} />
                <AnswerRow label="Correct Answer:" mark="ok" text="1.18 ± 0.01 (eV)" pad={5} />
              </Answers>
            </Question>

            <Question $top={21} $bottom={0}>
              <QuestionHead>
                <QuestionTitle>Question 9</QuestionTitle>
                <Points>0.5 out of 0.5 points</Points>
              </QuestionHead>
              <Prompt $ls={0.44}>
                <PromptLine>Uma função de onda da forma F(x - ct) propaga-se na direcção positiva do eixo dos xx.</PromptLine>
              </Prompt>
              <Answers $label={106} $row={21} $top={4} $left={70}>
                <AnswerRow label="Selected Answer:" mark="ok" text="True" pad={2} />
                <AnswerRow label="Correct Answer:" mark="ok" text="True" pad={2} />
              </Answers>
              <Timestamp>Monday, December 10, 2018 4:28:12 PM GMT</Timestamp>
            </Question>

            <OkButton><span>←</span><span>OK</span></OkButton>
          </Panel>
          <Scrollbar>
            <ScrollThumb />
            <Line w={9} h={6} color="#555" sw={1.600}><path d="M1 5l3.500-3.500L8 5" /></Line>
            <Line w={9} h={6} color="#aaa" sw={1.600}><path d="M1 1l3.500 3.500L8 1" /></Line>
          </Scrollbar>
        </PageArea>
      </BrowserPane>
    </Screen>
  );
}
